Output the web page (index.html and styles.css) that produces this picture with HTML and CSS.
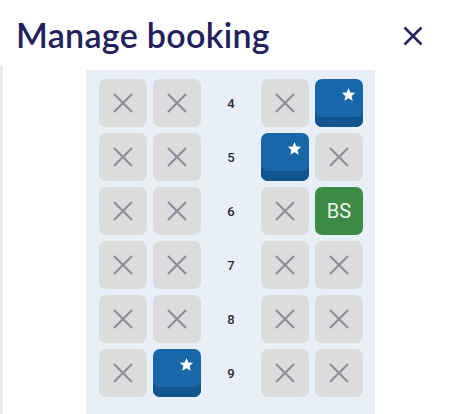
FILE: index.html
```html
<!DOCTYPE html>
<html lang="en">
<head>
  <meta charset="UTF-8">
  <meta name="viewport" content="width=device-width, initial-scale=1.0">
  <title>Manage booking</title>
  <link rel="stylesheet" href="styles.css">
</head>
<body>
  <header class="header">
    <h1>Manage booking</h1>
    <button class="close" aria-label="Close">
      <svg width="20" height="20" viewBox="0 0 20 20"><path d="M1.5 1.5 L18.5 18.5 M18.5 1.5 L1.5 18.5" stroke="#23235e" stroke-width="2.6" fill="none"/></svg>
    </button>
  </header>

  <main class="content">
    <div class="seatmap" id="seatmap"></div>
  </main>

  <script>
    // rows of seats: x = taken, s = free (star), b = booked
    const rows = [
      { n: 4, left: ['x', 'x'], right: ['x', 's'] },
      { n: 5, left: ['x', 'x'], right: ['s', 'x'] },
      { n: 6, left: ['x', 'x'], right: ['x', 'b'] },
      { n: 7, left: ['x', 'x'], right: ['x', 'x'] },
      { n: 8, left: ['x', 'x'], right: ['x', 'x'] },
      { n: 9, left: ['x', 's'], right: ['x', 'x'] }
    ];

    const cross = '<svg width="20" height="20" viewBox="0 0 20 20"><path d="M1 1 L19 19 M19 1 L1 19" stroke="#8c8b99" stroke-width="2" fill="none"/></svg>';
    const star = '<svg class="star" width="15" height="15" viewBox="0 0 24 24"><path d="M12 1.5 L15 8.6 L22.8 9.3 L16.9 14.4 L18.7 22 L12 18 L5.3 22 L7.1 14.4 L1.2 9.3 L9 8.6 Z" fill="#fff"/></svg>';

    function seat(type) {
      if (type === 'x') return '<div class="seat taken">' + cross + '</div>';
      if (type === 's') return '<div class="seat free">' + star + '</div>';
      return '<div class="seat booked">BS</div>';
    }

    const map = document.getElementById('seatmap');
    let html = '';
    rows.forEach(r => {
      html += r.left.map(seat).join('');
      html += '<div class="row-num">' + r.n + '</div>';
      html += r.right.map(seat).join('');
    });
    map.innerHTML = html;
  </script>
</body>
</html>
```

FILE: styles.css
```css
body {
  margin: 0;
  font-family: "Open Sans", Arial, sans-serif;
  background: #fff;
  overflow: hidden;
}

.header {
  display: flex;
  justify-content: space-between;
  align-items: center;
  height: 65px;
  padding: 0 37px 0 16px;
}

.header h1 {
  margin: 0;
  font-family: Lato, sans-serif;
  font-weight: 600;
  font-size: 34px;
  letter-spacing: 0.3px;
  color: #22215c;
  padding-top: 3px;
}

.close {
  border: none;
  background: none;
  padding: 0;
  display: flex;
  margin-top: 7px;
}

.content {
  border-left: 3px solid #ececec;
  padding-top: 5px;
  height: 344px;
  overflow: hidden;
}

.seatmap {
  width: 264px;
  margin: 0 auto;
  padding: 9px 12px 17px 13px;
  background: #e9eff8;
  display: grid;
  grid-template-columns: 48px 48px 48px 48px 48px;
  grid-auto-rows: 48px;
  gap: 6px;
  position: relative;
  left: -1px;
}

.seat {
  border-radius: 7px;
  display: flex;
  align-items: center;
  justify-content: center;
  box-sizing: border-box;
}

.taken {
  background: #dcdcdc;
}

.free {
  background: #1767a9;
  box-shadow: inset 0 -10px 0 #12558e;
  position: relative;
}

.star {
  position: absolute;
  top: 8px;
  right: 7px;
}

.booked {
  background: #3b8a45;
  color: #eef4ee;
  font-family: Roboto, sans-serif;
  font-size: 20px;
}

.row-num {
  display: flex;
  align-items: center;
  justify-content: center;
  font-family: Roboto, sans-serif;
  font-size: 13px;
  font-weight: 500;
  color: #2b2b33;
}
```
